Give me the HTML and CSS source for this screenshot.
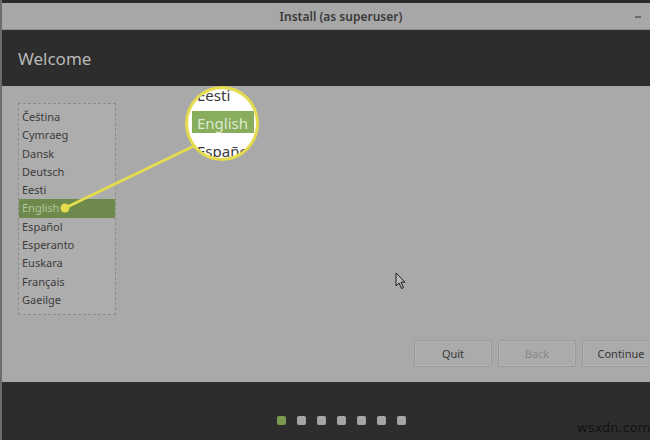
FILE: index.html
```html
<!DOCTYPE html>
<html lang="en">
<head>
    <meta charset="UTF-8">
    <title>Install (as superuser)</title>
    <link rel="stylesheet" href="styles.css">
</head>
<body>
    <div class="window">
        <div class="topline"></div>

        <!-- Title bar -->
        <div class="titlebar">
            <span class="title">Install (as superuser)</span>
            <span class="minimize"></span>
        </div>

        <!-- Page header -->
        <div class="header">Welcome</div>

        <!-- Main content -->
        <div class="content">
            <ul class="languages">
                <li>Čeština</li>
                <li>Cymraeg</li>
                <li>Dansk</li>
                <li>Deutsch</li>
                <li>Eesti</li>
                <li class="selected">English</li>
                <li>Español</li>
                <li>Esperanto</li>
                <li>Euskara</li>
                <li>Français</li>
                <li>Gaeilge</li>
            </ul>

            <div class="actions">
                <button class="btn">Quit</button>
                <button class="btn" disabled>Back</button>
                <button class="btn">Continue</button>
            </div>
        </div>

        <!-- Step dots -->
        <div class="footer">
            <span class="dot active"></span>
            <span class="dot"></span>
            <span class="dot"></span>
            <span class="dot"></span>
            <span class="dot"></span>
            <span class="dot"></span>
            <span class="dot"></span>
        </div>

        <!-- Callout: pointer line + magnifier -->
        <svg class="callout" width="300" height="240" viewBox="0 0 300 240">
            <line x1="65" y1="208" x2="196" y2="145" stroke="#e4dc4c" stroke-width="3" stroke-linecap="round"/>
            <circle cx="65" cy="208" r="4.5" fill="#e4dc4c"/>
        </svg>
        <div class="lens">
            <div class="lens-list">
                <div class="lens-item">Eesti</div>
                <div class="lens-item selected">English</div>
                <div class="lens-item">Español</div>
            </div>
        </div>

        <!-- Mouse pointer -->
        <svg class="cursor" width="12" height="18" viewBox="0 0 12 18">
            <path d="M1 1 L1 14 L4 11 L6.5 16.5 L8.5 15.6 L6 10.2 L10 10.2 Z" fill="#b8b8b8" stroke="#1e1e1e" stroke-width="1" stroke-linejoin="round"/>
        </svg>

        <div class="watermark">wsxdn.com</div>
    </div>
</body>
</html>
```

FILE: styles.css
```css
body {
    margin: 0;
    padding: 0;
    width: 650px;
    height: 440px;
    overflow: hidden;
    background-color: #2d2d2d;
    font-family: "Noto Sans", "DejaVu Sans", sans-serif;
}

.window {
    position: relative;
    width: 684px;
    height: 440px;
    border-left: 2px solid #6c6c6c;
    box-sizing: border-box;
}

.topline {
    height: 3px;
    background-color: #2a2a2a;
}

/* Title bar */
.titlebar {
    position: relative;
    height: 27px;
    display: flex;
    align-items: center;
    justify-content: center;
    padding-right: 4px;
    background-color: #a7a7a7;
    border-bottom: 1px solid #8e8e8e;
    box-sizing: border-box;
}

.title {
    font-size: 12px;
    font-weight: 600;
    color: #3a3a3a;
}

.minimize {
    position: absolute;
    left: 633px;
    top: 13px;
    width: 6px;
    height: 2px;
    background-color: #6a6a6a;
}

/* Header */
.header {
    height: 56px;
    padding-left: 16px;
    display: flex;
    align-items: center;
    background-color: #2d2d2d;
    color: #b8b8b8;
    font-size: 17px;
    box-sizing: border-box;
}

/* Content */
.content {
    height: 296px;
    padding: 17px 24px 15px 16px;
    display: flex;
    flex-direction: column;
    justify-content: space-between;
    background-color: #a9a9a9;
    box-sizing: border-box;
}

.languages {
    list-style: none;
    margin: 0;
    padding: 4px 0 0 0;
    width: 98px;
    height: 212px;
    border: 1px dashed #8c8c8c;
    background-color: #adadad;
    box-sizing: border-box;
}

.languages li {
    height: 18.3px;
    line-height: 18.3px;
    padding-left: 3px;
    font-size: 11px;
    color: #3c3c3c;
}

.languages li.selected {
    background-color: #6d8a4c;
    color: #b4c69e;
}

.actions {
    display: flex;
    justify-content: flex-end;
    gap: 6px;
}

.btn {
    width: 78px;
    height: 27px;
    padding: 0;
    font-family: inherit;
    font-size: 11px;
    color: #383838;
    background-color: #ababab;
    border: 1px solid #999999;
    border-radius: 2px;
    box-shadow: inset 0 0 0 1px #b3b3b3;
}

.btn:disabled {
    color: #888888;
}

/* Footer */
.footer {
    height: 58px;
    padding-top: 34px;
    padding-right: 4px;
    display: flex;
    justify-content: center;
    gap: 11px;
    box-sizing: border-box;
}

.dot {
    width: 9px;
    height: 9px;
    border-radius: 2px;
    background-color: #a6a6a6;
}

.dot.active {
    background-color: #7a9a52;
}

/* Callout overlay */
.callout {
    position: absolute;
    left: -2px;
    top: 0;
}

.lens {
    position: absolute;
    left: 183px;
    top: 86px;
    width: 74px;
    height: 75px;
    border: 3px solid #e4dc4c;
    border-radius: 50%;
    background-color: #ffffff;
    overflow: hidden;
    box-sizing: border-box;
}

.lens-list {
    margin-top: -6px;
    padding: 0 2px 0 4px;
}

.lens-item {
    height: 22px;
    line-height: 24px;
    margin-bottom: 6px;
    padding-left: 5px;
    font-size: 15px;
    color: #3a3a3a;
}

.lens-item.selected {
    background-color: #88ad5d;
    color: #dfe9cf;
}

.cursor {
    position: absolute;
    left: 393px;
    top: 272px;
}

.watermark {
    position: absolute;
    left: 575px;
    top: 420px;
    font-family: "DejaVu Sans", sans-serif;
    font-size: 13px;
    color: #121212;
}
```
